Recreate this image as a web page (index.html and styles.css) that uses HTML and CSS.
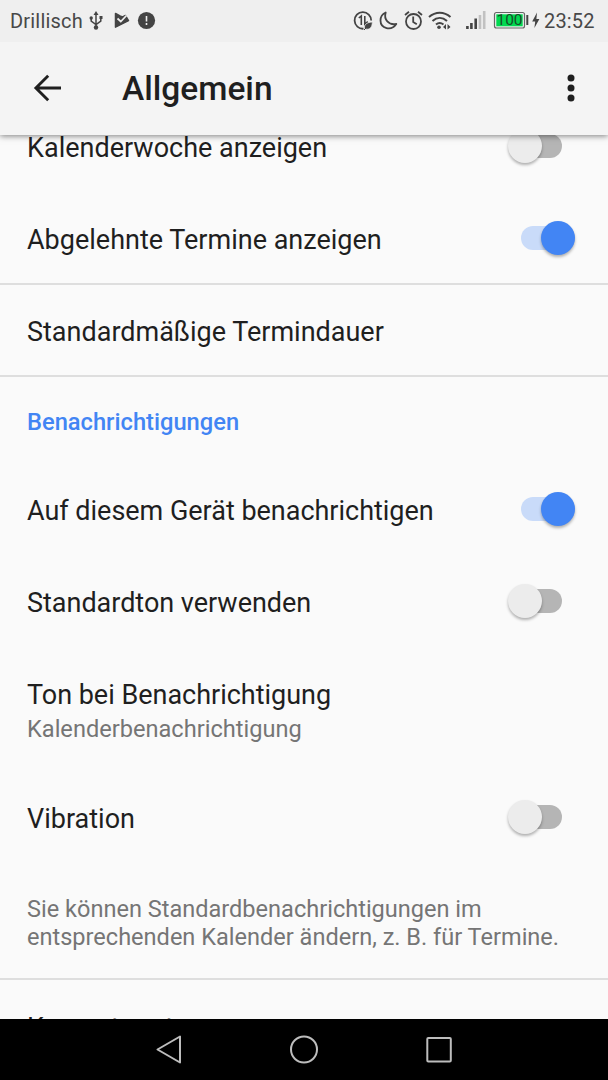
FILE: index.html
```html
<!DOCTYPE html>
<html lang="de">
<head>
<meta charset="utf-8">
<title>Allgemein</title>
<link rel="stylesheet" href="styles.css">
</head>
<body>
<div class="screen">
  <header class="top">
    <div class="status">
      <span class="carrier">Drillisch</span>
      <svg class="status-left" width="70" height="42" viewBox="88 0 70 42" fill="none" stroke="#444" stroke-width="1.5">
        <path d="M96 13v14M91.200 18v3.200L96 24.500l4.800-3.300V18"/>
        <path d="M96 11l2.500 4h-5zM99.500 16h3v3h-3z" fill="#444" stroke="none"/>
        <circle cx="91.200" cy="18" r="1.700" fill="#444" stroke="none"/><circle cx="96" cy="27.500" r="2.200" fill="#444" stroke="none"/>
        <path d="M115.500 13.500l4.500 2.500 2.500 1 3-1.500 3 5.200-13 6.500z" fill="#444" stroke="#444" stroke-width="1.500" stroke-linejoin="round"/>
        <path d="M117.500 18.500l3.300 3 5.700-6" stroke="#efefef" stroke-width="1.700"/>
        <circle cx="146.500" cy="20.500" r="8.600" fill="#444" stroke="none"/>
        <path d="M146.500 16v5.500M146.500 23v2" stroke="#efefef" stroke-width="1.600"/>
      </svg>
      <svg class="status-right" width="189" height="42" viewBox="352 0 189 42" fill="none" stroke="#444" stroke-width="1.800">
        <path d="M371.200 20.500A8.300 8.300 0 1 0 363.500 28.700"/>
        <path d="M358.800 18l2.500-2v9M364.800 16v8.200l3-2.500" stroke-width="1.600"/>
        <path d="M364.500 28.500c-.5-4 2-6 7.800-6.500 0 5-2.500 8-6.500 7z" fill="#444" stroke="#efefef" stroke-width=".7"/>
        <path d="M364 30l4-4" stroke-width="1"/>
        <path d="M385.700 12.500c-2.200 7 3 13 10.600 11.500-5 7.500-15.800 4.500-15.800-3.500 0-3.500 2-6.600 5.200-8z" stroke-linejoin="round"/>
        <circle cx="413.500" cy="21.500" r="7.500"/><path d="M413.200 16.500v5.500l3.600 2.300M405 15l4-3.200M418 11.800l4 3.200"/>
        <g stroke-width="2"><path d="M429 17c6.500-5.800 15-5.800 21.500 0M432.500 21c4.500-4 10-4 14.500 0M436 24.500c2.300-2 5-2 7.500 0"/></g>
        <circle cx="439" cy="27.300" r="1.800" fill="#444" stroke="none"/>
        <path d="M446 24v5.500l-3-2.500zM447.500 24v5.500l3-2.500z" fill="#444" stroke="none"/>
        <g stroke-width="2.600"><path d="M467.400 26v3M471.400 23v6M475.700 18.500V29"/><path d="M480 15v14M484.200 11v18" stroke="#c1c1c1"/></g>
        <rect x="494.500" y="12.500" width="30" height="15.500" rx="2" stroke="#666" stroke-width="1.200"/>
        <rect x="496.300" y="14.300" width="26.400" height="12" fill="#00d950" stroke="none"/>
        <path d="M527.300 15v10" stroke-width="2"/>
        <path d="M537 12.500l-4.800 9h3l-.8 6.500 5-9h-3z" fill="#444" stroke="none"/>
        <text class="battery" x="509.500" y="25.300" text-anchor="middle">100</text>
      </svg>
      <span class="clock">23:52</span>
    </div>
    <div class="toolbar">
      <svg class="back" width="30" height="30" viewBox="0 0 30 30" fill="none" stroke="#1f1f1f" stroke-width="2.900"><path d="M15.200 2.800L2.900 15l12.300 12.200M3.200 15H28"/></svg>
      <h1 class="title">Allgemein</h1>
      <svg class="more" width="10" height="30" viewBox="0 0 10 30" fill="#1f1f1f"><circle cx="5" cy="5" r="3.500"/><circle cx="5" cy="15" r="3.500"/><circle cx="5" cy="25" r="3.500"/></svg>
    </div>
  </header>
  <main class="list">
    <div class="row first"><span class="label">Kalenderwoche anzeigen</span><span class="switch"></span></div>
    <div class="row line"><span class="label">Abgelehnte Termine anzeigen</span><span class="switch on"></span></div>
    <div class="row line"><span class="label">Standardmäßige Termindauer</span></div>
    <h2 class="section">Benachrichtigungen</h2>
    <div class="row"><span class="label tight">Auf diesem Gerät benachrichtigen</span><span class="switch on"></span></div>
    <div class="row"><span class="label tight">Standardton verwenden</span><span class="switch"></span></div>
    <div class="row double"><span class="label tight">Ton bei Benachrichtigung</span><span class="sub">Kalenderbenachrichtigung</span></div>
    <div class="row"><span class="label">Vibration</span><span class="switch"></span></div>
    <p class="note line">Sie können Standardbenachrichtigungen im<br>entsprechenden Kalender ändern, z. B. für Termine.</p>
    <div class="row last"><span class="label">Kurzantworten</span></div>
  </main>
  <nav class="nav">
    <svg width="608" height="61" viewBox="0 1019 608 61" fill="none" stroke="#bdbdbd" stroke-width="2" stroke-linejoin="round"><path d="M157.500 1049.500L180 1036.500v26z"/><circle cx="304" cy="1049.500" r="13"/><rect x="427.300" y="1038" width="23.500" height="23.500" rx="1"/></svg>
  </nav>
</div>
</body>
</html>
```
FILE: styles.css
```css
* { box-sizing: border-box; }
body { margin: 0; font-family: Roboto, sans-serif; color: #1f1f1f; }
.screen { width: 608px; height: 1080px; display: flex; flex-direction: column; overflow: hidden; background: #fafafa; }
.top { position: relative; z-index: 1; flex: none; height: 135px; background: #f4f4f4; box-shadow: 0 1px 6px rgba(0,0,0,.5); }
.status { height: 42px; display: flex; align-items: center; background: #efefef; color: #484848; font-size: 20px; }
.carrier { width: 78px; margin-left: 10px; white-space: nowrap; letter-spacing: .2px; }
.status-right { margin-left: 194px; }
.battery { font: 400 15.500px Roboto, sans-serif; fill: #174d28; stroke: none; }
.clock { margin-left: 3px; letter-spacing: .15px; }
.toolbar { height: 93px; display: flex; align-items: center; padding: 0 32px 0 33px; }
.back { margin-bottom: 1px; }
.title { margin: 1px 0 0 59px; font-size: 33.500px; line-height: 40px; font-weight: 500; }
.more { margin: 0 0 1px auto; }
.list { flex: 1; min-height: 0; overflow: hidden; display: flex; flex-direction: column; }
.row { flex: none; height: 92px; padding: 0 33px 0 27px; border-bottom: 2px solid transparent; display: flex; align-items: center; justify-content: space-between; }
.first { margin-top: -34px; }
.line { border-bottom: 2px solid #dedede; }
.label { padding-top: 3px; font-size: 27px; line-height: 32px; white-space: nowrap; }
.tight { letter-spacing: -.02px; }
.switch { width: 54px; height: 24px; margin-right: 13px; border-radius: 12px; background: linear-gradient(#b5b5b5, #b5b5b5) right / 42px 24px no-repeat; display: flex; align-items: center; }
.switch::before { content: ""; width: 34px; height: 34px; flex: none; border-radius: 50%; background: #ececec; box-shadow: 0 2px 3px rgba(0,0,0,.3); }
.switch.on { margin-right: 0; background: #c9dbf9; justify-content: flex-end; }
.switch.on::before { background: #4285f4; }
.section { flex: none; height: 87px; margin: 0; padding: 0 27px; font-size: 23.700px; line-height: 91px; font-weight: 500; color: #4285f4; }
.double { height: 124px; padding-top: 2px; flex-direction: column; align-items: flex-start; justify-content: center; gap: 3px; }
.sub { font-size: 23.600px; line-height: 30px; color: #757575; }
.note { flex: none; height: 116px; margin: 0; padding: 32px 27px 0; font-size: 23.550px; line-height: 27.500px; color: #757575; white-space: nowrap; }
.last { margin-top: 1px; }
.nav { flex: none; height: 61px; background: #000; }
.nav svg { display: block; }
```
